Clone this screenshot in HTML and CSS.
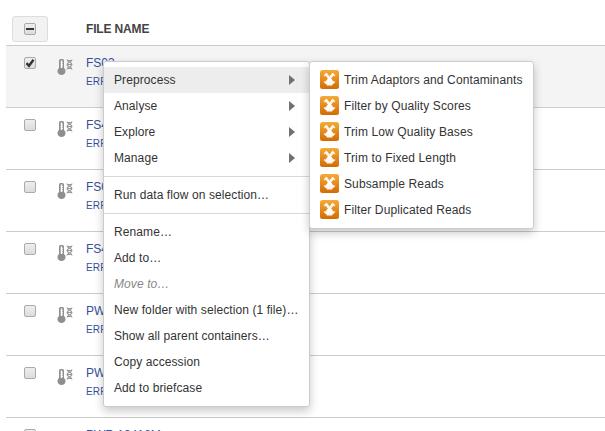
FILE: index.html
```html
<!DOCTYPE html>
<html lang="en">
<head>
<meta charset="utf-8">
<title>File browser</title>
<link rel="stylesheet" href="styles.css">
</head>
<body>
<svg class="defs" width="0" height="0" aria-hidden="true">
  <defs>
    <symbol id="sample" viewBox="0 0 17 17">
      <path d="M2 9V1.500A1.500 1.500 0 0 1 3.500 0h2A1.500 1.500 0 0 1 7 1.500V9a4 4 0 1 1-5 0z" fill="#8f8f8f"/>
      <path d="M4.500 1.500V9" stroke="#fff" stroke-width="1.600"/>
      <path d="M5 3.500h1M5 5.500h1M5 7.500h1" stroke="#fff" stroke-width=".7"/>
      <path d="M10 .5c0 3 5 2.500 5 5s-5 2-5 5M15 .5c0 3-5 2.500-5 5s5 2 5 5M10 1.500h5M10.500 5.500h4M10 9.500h5" fill="none" stroke="#999" stroke-width="1.100"/>
    </symbol>
    <linearGradient id="orange" x1="0" y1="0" x2="0" y2="1">
      <stop offset="0" stop-color="#f5ab38"/><stop offset="1" stop-color="#d26b05"/>
    </linearGradient>
    <symbol id="app" viewBox="0 0 19 19">
      <rect width="19" height="19" rx="2.500" fill="url(#orange)"/>
      <path d="M5.500 3.500l8 10M13.500 3.500l-8 10" stroke="#fff" stroke-width="2.800" opacity=".93"/>
      <path d="M4 6l3-2.500M15 6l-3-2.500M4 11.500l3 2.500M15 11.500l-3 2.500" stroke="#fff" stroke-width="1.200" opacity=".85"/>
      <path d="M8 8h3l1.500 7.500h-6z" fill="#fff" opacity=".93"/>
    </symbol>
  </defs>
</svg>
<main class="files">
  <div class="head"><div class="select-all"><span class="check"><svg viewBox="0 0 10 10"><path d="M1 5h8" stroke="#333" stroke-width="2"/></svg></span></div><span>FILE NAME</span></div>
  <div class="row selected"><span class="check"><svg viewBox="0 0 10 10"><path d="M1.500 5.200l2.500 2.600 4.500-6" fill="none" stroke="#333" stroke-width="2.400"/></svg></span><svg class="kind"><use href="#sample"/></svg><div class="name"><a>FS03</a><small>ERR</small></div></div>
  <div class="row"><span class="check"></span><svg class="kind"><use href="#sample"/></svg><div class="name"><a>FS43</a><small>ERR</small></div></div>
  <div class="row"><span class="check"></span><svg class="kind"><use href="#sample"/></svg><div class="name"><a>FS03</a><small>ERR</small></div></div>
  <div class="row"><span class="check"></span><svg class="kind"><use href="#sample"/></svg><div class="name"><a>FS43</a><small>ERR</small></div></div>
  <div class="row"><span class="check"></span><svg class="kind"><use href="#sample"/></svg><div class="name"><a>PWR</a><small>ERR</small></div></div>
  <div class="row"><span class="check"></span><svg class="kind"><use href="#sample"/></svg><div class="name"><a>PWR</a><small>ERR</small></div></div>
  <div class="row"><span class="check"></span><svg class="kind"><use href="#sample"/></svg><div class="name"><a>PWR 19416M</a></div></div>
</main>
<nav class="menu context">
  <div class="item active">Preprocess<i class="arrow"></i></div>
  <div class="item">Analyse<i class="arrow"></i></div>
  <div class="item">Explore<i class="arrow"></i></div>
  <div class="item">Manage<i class="arrow"></i></div>
  <hr>
  <div class="item">Run data flow on selection…</div>
  <hr>
  <div class="item">Rename…</div>
  <div class="item">Add to…</div>
  <div class="item disabled">Move to…</div>
  <div class="item">New folder with selection (1 file)…</div>
  <div class="item">Show all parent containers…</div>
  <div class="item">Copy accession</div>
  <div class="item">Add to briefcase</div>
</nav>
<nav class="menu submenu">
  <div class="item"><svg class="app"><use href="#app"/></svg>Trim Adaptors and Contaminants</div>
  <div class="item"><svg class="app"><use href="#app"/></svg>Filter by Quality Scores</div>
  <div class="item"><svg class="app"><use href="#app"/></svg>Trim Low Quality Bases</div>
  <div class="item"><svg class="app"><use href="#app"/></svg>Trim to Fixed Length</div>
  <div class="item"><svg class="app"><use href="#app"/></svg>Subsample Reads</div>
  <div class="item"><svg class="app"><use href="#app"/></svg>Filter Duplicated Reads</div>
</nav>
</body>
</html>
```
FILE: styles.css
```css
* { box-sizing: border-box; }
body {
  margin: 0;
  height: 431px;
  overflow: hidden;
  position: relative;
  background: #fff;
  color: #333;
  font: 12px/26px "Liberation Sans", Arial, sans-serif;
}
.defs { position: absolute; }
.files { height: 431px; padding-left: 6px; overflow: hidden; }
.head {
  display: flex;
  height: 46px;
  padding: 16px 0 0 6px;
  border-bottom: 1px solid #ccc;
  font-weight: bold;
  letter-spacing: -.15px;
  color: #444;
}
.select-all {
  display: flex;
  width: 36px;
  height: 26px;
  margin-right: 38px;
  align-items: center;
  justify-content: center;
  background: #f2f2f2;
  border: 1px solid #ddd;
  border-radius: 3px;
}
.check {
  display: block;
  flex: none;
  width: 12px;
  height: 12px;
  border: 1px solid #aaa;
  border-radius: 2px;
  background: linear-gradient(#eee, #dcdcdc);
}
.check svg { display: block; width: 10px; height: 10px; }
.row {
  display: flex;
  align-items: flex-start;
  height: 62px;
  padding: 11px 0 0 18px;
  border-bottom: 1px solid #ccc;
}
.row:last-child { height: 23px; border: 0; }
.row.selected { background: #f4f4f4; }
.kind { flex: none; width: 17px; height: 17px; margin: 2px 0 0 21px; }
.name { margin: -1px 0 0 12px; color: #34509b; }
.name a, .name small { display: block; line-height: 14px; white-space: nowrap; }
.name small { margin-top: 5px; font-size: 10px; letter-spacing: .2px; }
.menu {
  position: absolute;
  top: 61px;
  padding: 5px 0;
  background: #fff;
  border: 1px solid #ccc;
  border-radius: 3px;
  box-shadow: 0 4px 10px rgba(0, 0, 0, .22);
}
.context { left: 103px; width: 207px; letter-spacing: .09px; }
.submenu { left: 309px; width: 225px; letter-spacing: .12px; }
.item {
  display: flex;
  align-items: center;
  height: 26px;
  padding: 0 0 0 10px;
  white-space: nowrap;
}
.active { background: #ededed; }
.disabled { color: #888; font-style: italic; }
.menu hr { height: 1px; margin: 5px 0; border: 0; background: #d8d8d8; }
.arrow {
  margin: 0 14px 0 auto;
  border: solid transparent;
  border-width: 5px 0 5px 6px;
  border-left-color: #707070;
}
.app { flex: none; width: 19px; height: 19px; margin: 0 5px 2px 0; }
```
